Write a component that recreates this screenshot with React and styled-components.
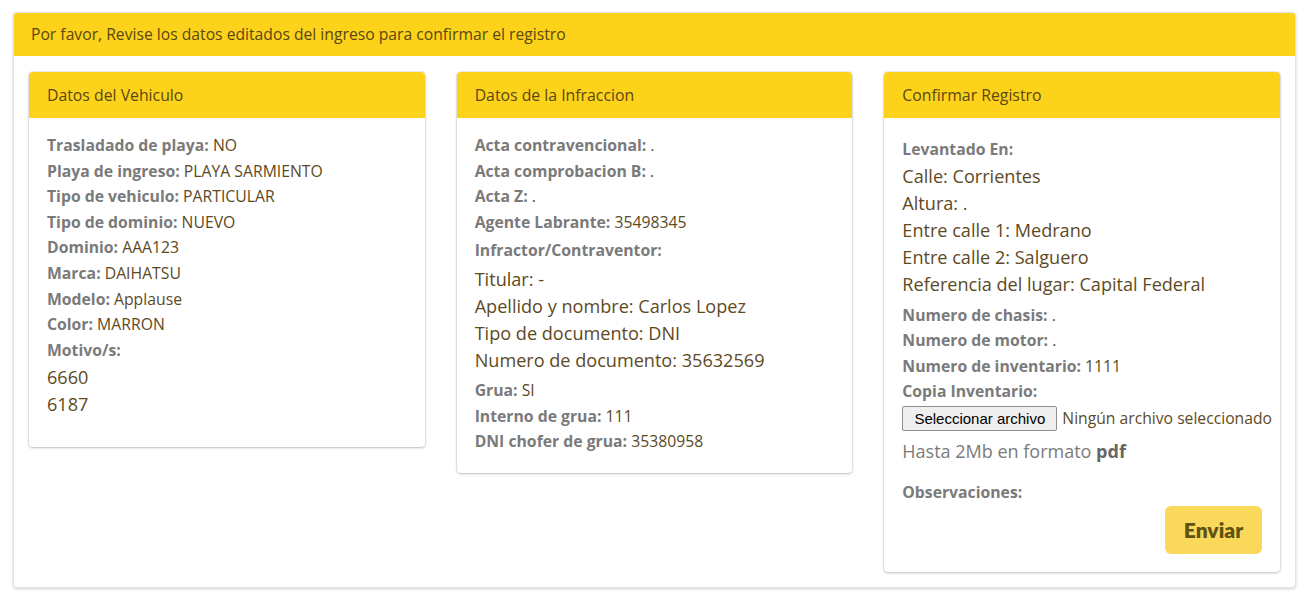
import React from "react";
import styled, { createGlobalStyle } from "styled-components";

const GlobalStyle = createGlobalStyle`
  html, body { margin: 0; padding: 0; background: #fff; }
  body { font-family: "Open Sans", "Liberation Sans", Arial, sans-serif; }
  * { box-sizing: border-box; }
`;

const Page = styled.div`
  padding: 12px 10px 12px 13px;
`;

const Panel = styled.section`
  border: 1px solid #e2e2e2;
  border-radius: 4px;
  box-shadow: 0 1px 3px rgba(0, 0, 0, 0.18);
  background: #fff;
  overflow: hidden;
`;

const PanelHeader = styled.div`
  background: #fdd21a;
  color: #5a4712;
  font-size: 15.7px;
  height: 43px;
  line-height: 43px;
  padding: 0 17px;
  white-space: nowrap;
`;

const PanelBody = styled.div`
  padding: 16px 15px 15px 15px;
  display: grid;
  grid-template-columns: repeat(3, 1fr);
  column-gap: 32px;
  align-items: start;
`;

const Card = styled.div`
  border-radius: 4px;
  background: #fff;
  box-shadow: 0 0 0 1px rgba(0, 0, 0, 0.06), 0 1px 3px rgba(0, 0, 0, 0.22);
  overflow: hidden;
`;

const CardHeader = styled.div`
  background: #fdd21a;
  color: #5a4712;
  font-size: 15.8px;
  height: 46px;
  line-height: 46px;
  padding: 0 18px;
  white-space: nowrap;
`;

const CardBody = styled.div`
  padding: ${(p) => p.$pad || "15px 18px 18px 18px"};
`;

const Field = styled.div`
  font-size: 15.75px;
  line-height: 25.6px;
  color: #5d4a1f;
  margin-top: ${(p) => p.$mt || 0}px;
  white-space: nowrap;
`;

const Label = styled.span`
  color: #7a7a7a;
  font-weight: 700;
`;

const Big = styled.div`
  font-size: 18.1px;
  line-height: 27px;
  color: #5d4a1f;
  white-space: nowrap;
`;

const List = styled.div`
  margin-top: ${(p) => p.$mt || 0}px;
  margin-bottom: ${(p) => p.$mb || 0}px;
`;

const FileRow = styled.div`
  display: flex;
  align-items: center;
  gap: 5px;
  height: 25px;
  margin-top: 1px;
  white-space: nowrap;
`;

const FileButton = styled.button`
  font-family: "Liberation Sans", Arial, sans-serif;
  font-size: 15px;
  color: #000;
  background: #efefef;
  border: 1px solid #8f8f8f;
  border-radius: 2px;
  height: 25px;
  width: 155px;
  padding: 0;
  flex: none;
`;

const FileText = styled.span`
  font-size: 15.7px;
  color: #5d4a1f;
`;

const Hint = styled.div`
  font-size: 18px;
  line-height: 26px;
  color: #7b7b7b;
  margin-top: 7px;
  b { color: #666; font-weight: 700; }
`;

const Actions = styled.div`
  display: flex;
  justify-content: flex-end;
`;

const SubmitButton = styled.button`
  font-family: "Lato", "Open Sans", sans-serif;
  font-weight: 800;
  font-size: 21px;
  color: #60520f;
  background: #fad85c;
  border: none;
  border-radius: 6px;
  width: 97px;
  height: 48px;
  padding: 0;
`;

const F = ({ l, v, mt }) => (
  <Field $mt={mt}>
    <Label>{l}:</Label>
    {v !== undefined ? ` ${v}` : ""}
  </Field>
);

export default function App() {
  return (
    <>
      <GlobalStyle />
      <Page>
        <Panel>
          <PanelHeader>
            Por favor, Revise los datos editados del ingreso para confirmar el registro
          </PanelHeader>
          <PanelBody>
            <Card>
              <CardHeader>Datos del Vehiculo</CardHeader>
              <CardBody $pad="15px 18px 18px 18px">
                <F l="Trasladado de playa" v="NO" />
                <F l="Playa de ingreso" v="PLAYA SARMIENTO" />
                <F l="Tipo de vehiculo" v="PARTICULAR" />
                <F l="Tipo de dominio" v="NUEVO" />
                <F l="Dominio" v="AAA123" />
                <F l="Marca" v="DAIHATSU" />
                <F l="Modelo" v="Applause" />
                <F l="Color" v="MARRON" />
                <F l="Motivo/s" />
                <List $mt={1} $mb={11}>
                  <Big>6660</Big>
                  <Big>6187</Big>
                </List>
              </CardBody>
            </Card>

            <Card>
              <CardHeader>Datos de la Infraccion</CardHeader>
              <CardBody $pad="15px 18px 18px 18px">
                <F l="Acta contravencional" v="." />
                <F l="Acta comprobacion B" v="." />
                <F l="Acta Z" v="." />
                <F l="Agente Labrante" v="35498345" />
                <F l="Infractor/Contraventor" mt={3} />
                <List $mt={2} $mb={4}>
                  <Big>Titular: -</Big>
                  <Big>Apellido y nombre: Carlos Lopez</Big>
                  <Big>Tipo de documento: DNI</Big>
                  <Big>Numero de documento: 35632569</Big>
                </List>
                <F l="Grua" v="SI" />
                <F l="Interno de grua" v="111" />
                <F l="DNI chofer de grua" v="35380958" />
              </CardBody>
            </Card>

            <Card>
              <CardHeader>Confirmar Registro</CardHeader>
              <CardBody $pad="19px 18px 18px 18px">
                <F l="Levantado En" />
                <List $mt={0} $mb={5}>
                  <Big>Calle: Corrientes</Big>
                  <Big>Altura: .</Big>
                  <Big>Entre calle 1: Medrano</Big>
                  <Big>Entre calle 2: Salguero</Big>
                  <Big>Referencia del lugar: Capital Federal</Big>
                </List>
                <F l="Numero de chasis" v="." />
                <F l="Numero de motor" v="." />
                <F l="Numero de inventario" v="1111" />
                <F l="Copia Inventario" />
                <FileRow>
                  <FileButton type="button">Seleccionar archivo</FileButton>
                  <FileText>Ningún archivo seleccionado</FileText>
                </FileRow>
                <Hint>
                  Hasta 2Mb en formato <b>pdf</b>
                </Hint>
                <F l="Observaciones" mt={16} />
                <Actions>
                  <SubmitButton type="button">Enviar</SubmitButton>
                </Actions>
              </CardBody>
            </Card>
          </PanelBody>
        </Panel>
      </Page>
    </>
  );
}
